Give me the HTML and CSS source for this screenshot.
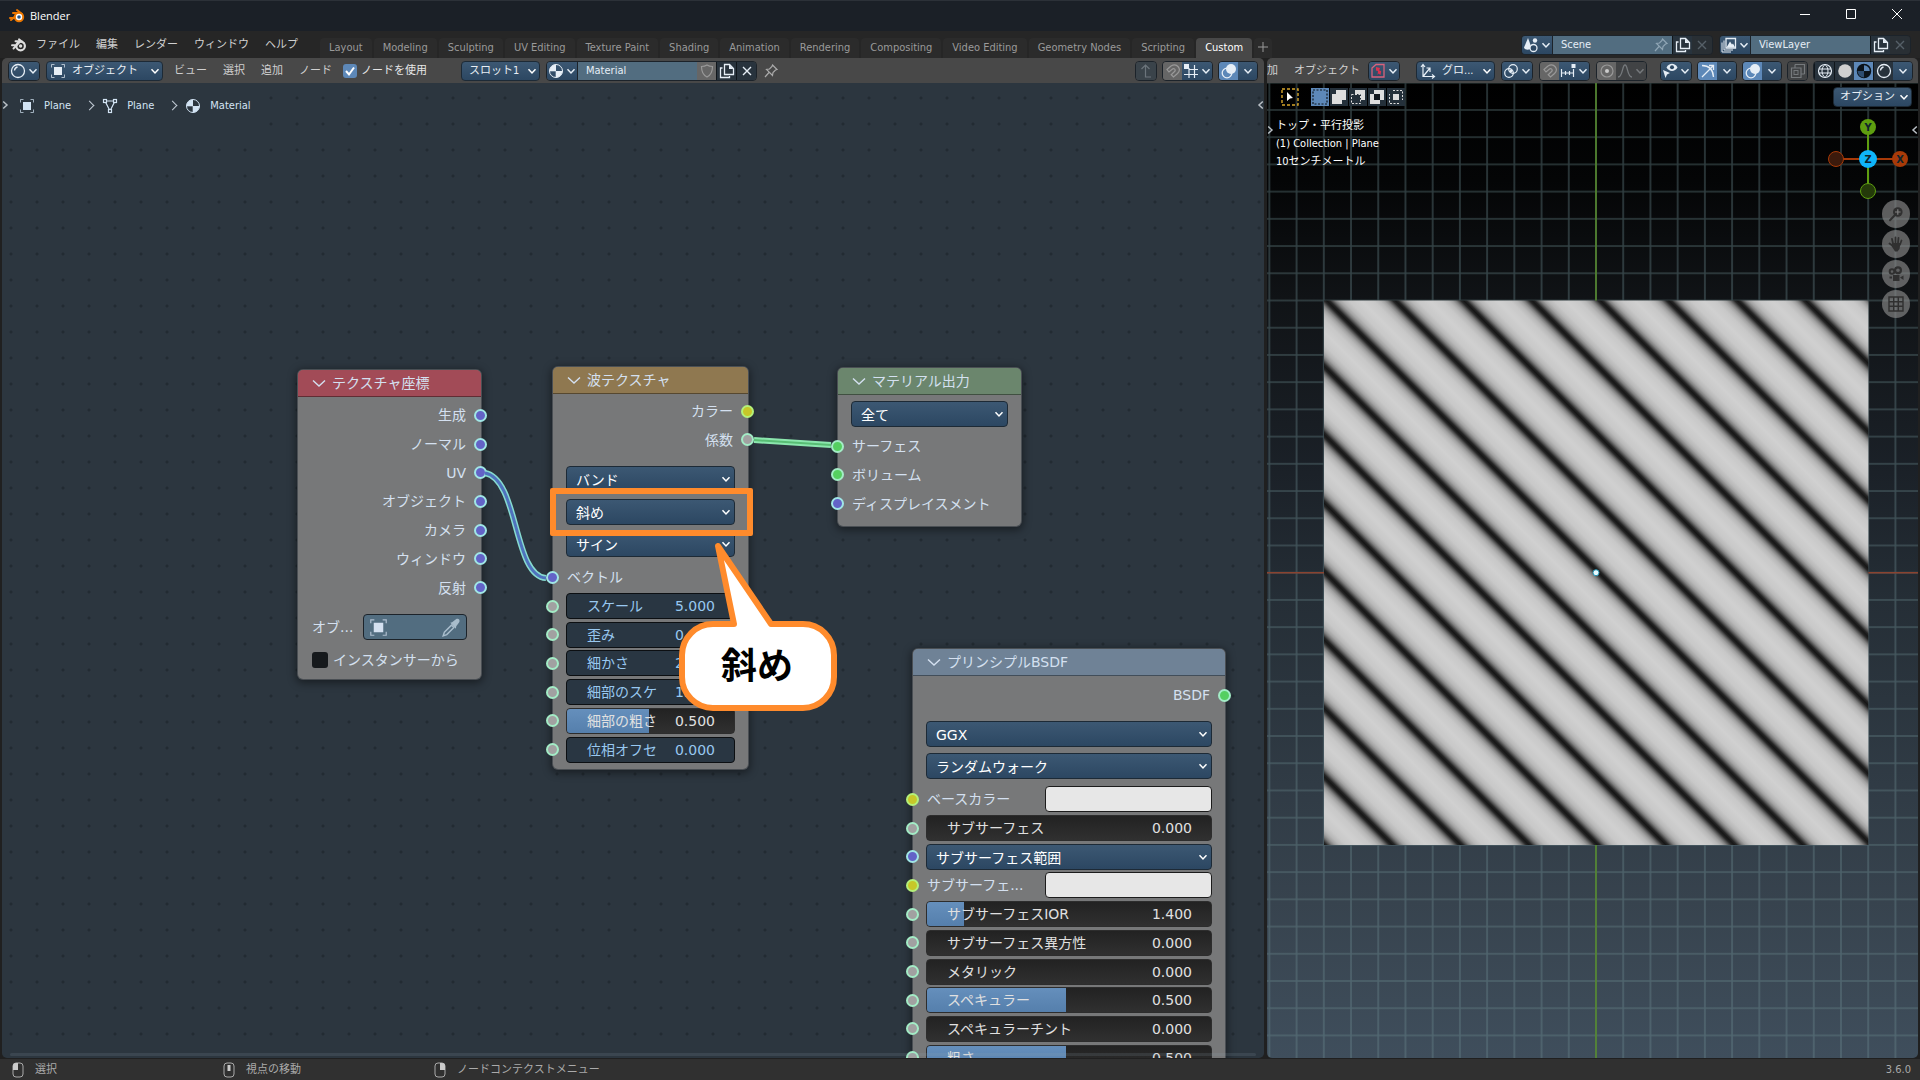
FILE: index.html
```html
<!DOCTYPE html>
<html lang="ja">
  <head>
    <meta charset="UTF-8" />
    <title>Blender</title>
    <link rel="stylesheet" href="styles.css">
  </head>
  <body>
    <!-- icon sprite -->
    <svg class="sprite" aria-hidden="true">
      <symbol id="chev" viewBox="0 0 10 10"><path d="M1.500 3.200L5 7l3.500-3.800" fill="none" stroke="currentColor" stroke-width="1.500"/></symbol>
      <symbol id="fold" viewBox="0 0 14 14"><path d="M1 4.500L7 10l6-5.500" fill="none" stroke="currentColor" stroke-width="1.400"/></symbol>
      <symbol id="logo" viewBox="0 0 16 16"><path d="M1 8.200h4.500M4.500 4.300h5L2.500 11.500M8 2.300l5 4" fill="none" stroke="currentColor" stroke-width="1.900" stroke-linecap="round"/><circle cx="9.600" cy="9" r="4.300" fill="none" stroke="currentColor" stroke-width="2.200"/><circle cx="9.600" cy="9" r="1.700" fill="currentColor"/></symbol>
      <symbol id="shader" viewBox="0 0 16 16"><circle cx="8" cy="8" r="6.500" fill="none" stroke="currentColor" stroke-width="1.300"/><path d="M4.500 7.500A4 4 0 0 1 7.500 4" fill="none" stroke="currentColor" stroke-width="1.300"/></symbol>
      <symbol id="object" viewBox="0 0 16 16"><rect x="4" y="4" width="8" height="8" fill="currentColor"/><path d="M1.500 4.500v-3h3M11.500 1.500h3v3M14.500 11.500v3h-3M4.500 14.500h-3v-3" fill="none" stroke="currentColor" stroke-opacity=".7"/></symbol>
      <symbol id="mesh" viewBox="0 0 16 16"><path d="M3 3h10L8 13z" fill="none" stroke="currentColor" stroke-width="1.200"/><g fill="#2d3740" stroke="currentColor" stroke-width="1.200"><rect x="1.500" y="1.500" width="3" height="3"/><rect x="11.500" y="1.500" width="3" height="3"/><rect x="6.500" y="11.500" width="3" height="3"/></g></symbol>
      <symbol id="material" viewBox="0 0 16 16"><circle cx="8" cy="8" r="6.500" fill="none" stroke="currentColor"/><path d="M8 1.500A6.500 6.500 0 0 0 1.500 8H8zM8 8h6.500A6.500 6.500 0 0 1 8 14.500z" fill="currentColor"/><path d="M8 14.500V8H1.500" fill="none" stroke="currentColor" stroke-width=".6"/></symbol>
      <symbol id="shield" viewBox="0 0 16 16"><path d="M8 2c2 1.300 3.500 1.500 5.500 1.500 0 5-1.500 8.500-5.500 10.500C4 12 2.500 8.500 2.500 3.500 4.500 3.500 6 3.300 8 2z" fill="none" stroke="currentColor" stroke-width="1.200"/></symbol>
      <symbol id="copy" viewBox="0 0 16 16"><path d="M5.500 1.500h5l4 4v6h-9z" fill="none" stroke="currentColor" stroke-width="1.300"/><path d="M10 1.500v4.500h4.500z" fill="currentColor"/><path d="M3.500 5h-2v9.500h9V13" fill="none" stroke="currentColor" stroke-width="1.300"/></symbol>
      <symbol id="cross" viewBox="0 0 16 16"><path d="M4 4l8 8M12 4l-8 8" stroke="currentColor" stroke-width="1.400"/></symbol>
      <symbol id="pin" viewBox="0 0 16 16"><path d="M9.500 2l4.500 4.500-1.500.5-2.500 2.500-.5 3L3.500 6.500l3-.5L9 3.500zM6 9.500l-4 4.500" fill="none" stroke="currentColor" stroke-width="1.200"/></symbol>
      <symbol id="up" viewBox="0 0 16 16"><path d="M3.500 6L7.500 2l4 4M7.500 2v12H13" fill="none" stroke="currentColor" stroke-width="1.200"/></symbol>
      <symbol id="magnet" viewBox="0 0 16 16"><path d="M2 6.500l4-3.500c6-3.500 11 3 6.500 7.500L8.500 14l-2.300-2.300 3.600-3.400C11 6.500 9 5 7.500 6L4 9z" fill="none" stroke="currentColor" stroke-width="1.200"/></symbol>
      <symbol id="snapgrid" viewBox="0 0 16 16"><path d="M6 5v10M11.500 2v13M1 11.500h14M6 6.500h9" stroke="currentColor" stroke-width="1.200"/><rect x="1" y="1" width="5" height="5" fill="currentColor"/></symbol>
      <symbol id="overlay" viewBox="0 0 16 16"><circle cx="10" cy="6" r="5" fill="currentColor"/><circle cx="6" cy="10" r="4.800" fill="none" stroke="currentColor" stroke-width="1.300"/></symbol>
      <symbol id="scene" viewBox="0 0 16 16"><path d="M5 1l3.500 9.500c-1.500 3-6.500 3-7.500 0z" fill="currentColor"/><circle cx="12" cy="3.500" r="2.200" fill="currentColor"/><circle cx="10.500" cy="11" r="3.500" fill="#2d4863" stroke="currentColor" stroke-width="1.300"/></symbol>
      <symbol id="layers" viewBox="0 0 16 16"><path d="M5 1.500h9.500V11H5z" fill="none" stroke="currentColor" stroke-width="1.300"/><path d="M5.500 10.500L9 4.500l2 3 1-1 2.200 4z" fill="currentColor"/><path d="M3 3.500V13h9M1 5.500V15h9" fill="none" stroke="currentColor"/></symbol>
      <symbol id="axes" viewBox="0 0 16 16"><path d="M3 1.500v12h11.500M3 13.500L10 5M1 4l2-2.500L5 4M12 11.500l2.500 2-2.500 2M6.500 5H10v4" fill="none" stroke="currentColor" stroke-width="1.200"/></symbol>
      <symbol id="pivot" viewBox="0 0 16 16"><circle cx="10" cy="6" r="4.300" fill="none" stroke="currentColor" stroke-width="1.200"/><circle cx="6" cy="10" r="4.300" fill="none" stroke="currentColor" stroke-width="1.200"/><circle cx="8" cy="8" r="1.500" fill="currentColor"/></symbol>
      <symbol id="increment" viewBox="0 0 16 16"><path d="M1.500 6v8M5.500 8v4M9.500 8v4M13.500 6v8M1.500 10h12" stroke="currentColor" stroke-width="1.200"/><rect x="11.500" y="1" width="4" height="4" fill="currentColor"/></symbol>
      <symbol id="prop" viewBox="0 0 16 16"><circle cx="8" cy="8" r="6" fill="none" stroke="currentColor" stroke-width="1.200"/><circle cx="8" cy="8" r="2" fill="#ccc"/></symbol>
      <symbol id="curve" viewBox="0 0 16 16"><path d="M1 14c5 0 4-12 7-12s2 12 7 12" fill="none" stroke="currentColor" stroke-width="1.300"/></symbol>
      <symbol id="redselect" viewBox="0 0 16 16"><path d="M2 14V5l4-3.500h8V14z" fill="none" stroke="#d9627c" stroke-width="1.300"/><path d="M6 4l4 1-.8 2.500 2 .5-.7 4-2-1.500-1 1.500L8 8 6 7.500z" fill="#d9324f"/></symbol>
      <symbol id="eye" viewBox="0 0 16 16"><path d="M4.500 4.500C7-.5 13-.5 15.500 4.500 13 9 7 9 4.500 4.500z" fill="currentColor"/><circle cx="10" cy="4.300" r="2" fill="#2d4863"/><path d="M1 7l7 3-3 1.500L3.500 15z" fill="currentColor"/></symbol>
      <symbol id="gizmo" viewBox="0 0 16 16"><path d="M2 2.500c7 0 11 4 11.500 11.500M2 14L13 3M9 2.500h4.500V7" fill="none" stroke="currentColor" stroke-width="1.300"/></symbol>
      <symbol id="xray" viewBox="0 0 16 16"><path d="M5 1.500h9.500V11M1.500 5H11v9.500H1.500zM5 5V1.500M11 11h3.500" fill="none" stroke="currentColor" stroke-width="1.200"/><rect x="4" y="7.500" width="4" height="4" fill="none" stroke="currentColor"/></symbol>
      <symbol id="wire" viewBox="0 0 16 16"><circle cx="8" cy="8" r="6.500" fill="none" stroke="currentColor" stroke-width="1.200"/><path d="M8 1.500c-4 3-4 10 0 13 4-3 4-10 0-13M2 6h12M2 10h12" fill="none" stroke="currentColor"/></symbol>
      <symbol id="solid" viewBox="0 0 16 16"><circle cx="8" cy="8" r="6.800" fill="#d0d0d0"/></symbol>
      <symbol id="preview" viewBox="0 0 16 16"><circle cx="8" cy="8" r="6.500" fill="#5b85b4" stroke="#0b1219" stroke-width="1.500"/><path d="M8 1.500A6.500 6.500 0 0 0 1.500 8H8zM8 8h6.500A6.500 6.500 0 0 1 8 14.500z" fill="#0b1219"/><path d="M8 8v6.500A6.500 6.500 0 0 1 1.500 8z" fill="#2e4d70"/></symbol>
      <symbol id="search" viewBox="0 0 16 16"><circle cx="9.800" cy="6" r="4.800" fill="currentColor"/><path d="M7 9l-5 5.200" stroke="currentColor" stroke-width="2" stroke-linecap="round"/><path d="M9.800 3.200v5.600M7 6h5.600" stroke="#808080" stroke-width="1.200"/></symbol>
      <symbol id="hand" viewBox="0 0 16 16"><path d="M5 7.500L4 3M7.500 7V1.500M10 7l.5-5M12 8.500l1.500-4M5 10L1.500 7.500" stroke="currentColor" stroke-width="1.800" stroke-linecap="round"/><path d="M4 7h8.500l-1 6-2 2.500H7L3.500 10z" fill="currentColor"/></symbol>
      <symbol id="camera" viewBox="0 0 16 16"><circle cx="4" cy="5.500" r="2.300" fill="none" stroke="currentColor" stroke-width="2"/><circle cx="10" cy="4.200" r="2.900" fill="none" stroke="currentColor" stroke-width="2.200"/><path d="M5 9h6.500v6H5zM12 11.500l3.500-2v4.500zM1.500 10.500h2.500v2H1.500z" fill="currentColor"/></symbol>
      <symbol id="grid" viewBox="0 0 16 16"><path d="M1 1h14v14H1zM5.700 1v14M10.300 1v14M1 5.700h14M1 10.300h14" fill="none" stroke="currentColor" stroke-width="1.400"/></symbol>
      <symbol id="dropper" viewBox="0 0 16 16"><path d="M1 15l1-3 6-6 2 2-6 6z" fill="none" stroke="currentColor" stroke-width="1.200"/><path d="M7 4l1.500-.5L12 .8c2-.8 3.500 1 2.500 2.800L12 7l-.3 2z" fill="currentColor"/></symbol>
    </svg>

    <header class="titlebar">
      <svg class="app-icon" viewBox="0 0 16 16"><path d="M1 10h4M4 5h6L2 12M8 2l5 4" fill="none" stroke="#ea7600" stroke-width="2" stroke-linecap="round"/><circle cx="10" cy="9" r="5.200" fill="#ea7600"/><circle cx="10" cy="9" r="3.200" fill="#fff"/><circle cx="10" cy="9" r="1.800" fill="#265787"/></svg>
      <h1>Blender</h1>
      <div class="window-buttons">
        <button aria-label="Minimize"><svg viewBox="0 0 10 10"><path d="M0 5.500h10" stroke="#fff"/></svg></button>
        <button aria-label="Maximize"><svg viewBox="0 0 10 10"><path d="M.5.500h9v9h-9z" fill="none" stroke="#fff"/></svg></button>
        <button aria-label="Close"><svg viewBox="0 0 10 10"><path d="M0 0l10 10M10 0L0 10" stroke="#fff"/></svg></button>
      </div>
    </header>

    <div class="topbar">
      <svg class="icon logo"><use href="#logo"/></svg>
      <nav class="menu">
        <a href="#">ファイル</a><a href="#">編集</a><a href="#">レンダー</a><a href="#">ウィンドウ</a><a href="#">ヘルプ</a>
      </nav>
      <nav class="tabs">
        <a href="#">Layout</a>
        <a href="#">Modeling</a>
        <a href="#">Sculpting</a>
        <a href="#">UV Editing</a>
        <a href="#">Texture Paint</a>
        <a href="#">Shading</a>
        <a href="#">Animation</a>
        <a href="#">Rendering</a>
        <a href="#">Compositing</a>
        <a href="#">Video Editing</a>
        <a href="#">Geometry Nodes</a>
        <a href="#">Scripting</a>
        <a href="#" class="active">Custom</a>
        <a href="#" class="plus" aria-label="Add workspace"><svg viewBox="0 0 10 10"><path d="M5 0v10M0 5h10" stroke="#9a9a9a"/></svg></a>
      </nav>
      <div class="group scene">
        <button class="dd"><svg class="icon"><use href="#scene"/></svg><svg class="chev"><use href="#chev"/></svg></button>
        <span class="name-box"><input aria-label="Scene" value="Scene"><svg class="icon faint"><use href="#pin"/></svg></span>
        <button class="dark"><svg class="icon"><use href="#copy"/></svg></button>
        <button class="off"><svg class="icon"><use href="#cross"/></svg></button>
      </div>
      <div class="group">
        <button class="dd"><svg class="icon"><use href="#layers"/></svg><svg class="chev"><use href="#chev"/></svg></button>
        <span class="name-box"><input aria-label="View layer" value="ViewLayer"></span>
        <button class="dark"><svg class="icon"><use href="#copy"/></svg></button>
        <button class="off"><svg class="icon"><use href="#cross"/></svg></button>
      </div>
    </div>

    <main class="workspace">
      <section class="area node-area">
        <div class="area-header">
          <div class="group"><button class="dd"><svg class="icon"><use href="#shader"/></svg><svg class="chev"><use href="#chev"/></svg></button></div>
          <div class="mode">
            <svg class="icon"><use href="#object"/></svg>
            <select aria-label="Shader type"><option>オブジェクト</option></select>
          </div>
          <nav class="menu">
            <a href="#">ビュー</a><a href="#">選択</a><a href="#">追加</a><a href="#">ノード</a>
          </nav>
          <label class="use-nodes"><input type="checkbox" checked>ノードを使用</label>
          <select class="slot" aria-label="Slot"><option>スロット1</option></select>
          <div class="group">
            <button class="dd"><svg class="icon"><use href="#material"/></svg><svg class="chev"><use href="#chev"/></svg></button>
            <span class="name-box"><input aria-label="Material" value="Material"></span>
            <button class="gray"><svg class="icon"><use href="#shield"/></svg></button>
            <button class="dark"><svg class="icon"><use href="#copy"/></svg></button>
            <button class="dark"><svg class="icon"><use href="#cross"/></svg></button>
          </div>
          <svg class="icon header-pin"><use href="#pin"/></svg>
          <div class="header-right">
            <div class="group"><button class="off up"><svg class="icon"><use href="#up"/></svg></button></div>
            <div class="group">
              <button class="gray"><svg class="icon"><use href="#magnet"/></svg></button>
              <button class="dd"><svg class="icon"><use href="#snapgrid"/></svg><svg class="chev"><use href="#chev"/></svg></button>
            </div>
            <div class="group">
              <button class="on"><svg class="icon"><use href="#overlay"/></svg></button>
              <button><svg class="chev"><use href="#chev"/></svg></button>
            </div>
          </div>
        </div>

        <div class="node-canvas">
          <ol class="breadcrumb">
            <li><svg class="icon"><use href="#object"/></svg>Plane</li>
            <li><svg class="icon"><use href="#mesh"/></svg>Plane</li>
            <li><svg class="icon"><use href="#material"/></svg>Material</li>
          </ol>
          <svg class="edge edge-left"><use href="#chev"/></svg>
          <svg class="edge edge-right"><use href="#chev"/></svg>

          <article class="node coord">
            <h2><svg class="fold"><use href="#fold"/></svg>テクスチャ座標</h2>
            <ul class="rows">
              <li class="out">生成<i class="socket vector"></i></li>
              <li class="out">ノーマル<i class="socket vector"></i></li>
              <li class="out">UV<i class="socket vector"></i></li>
              <li class="out">オブジェクト<i class="socket vector"></i></li>
              <li class="out">カメラ<i class="socket vector"></i></li>
              <li class="out">ウィンドウ<i class="socket vector"></i></li>
              <li class="out">反射<i class="socket vector"></i></li>
            </ul>
            <div class="object-row">
              <span>オブ...</span>
              <button class="object-pick" aria-label="オブジェクト"><svg class="icon"><use href="#object"/></svg><svg class="icon dropper"><use href="#dropper"/></svg></button>
            </div>
            <label class="instancer"><input type="checkbox">インスタンサーから</label>
          </article>

          <article class="node wave">
            <h2><svg class="fold"><use href="#fold"/></svg>波テクスチャ</h2>
            <ul class="rows">
              <li class="out">カラー<i class="socket color"></i></li>
              <li class="out">係数<i class="socket value"></i></li>
            </ul>
            <div class="selects">
              <select aria-label="Wave type"><option>バンド</option></select>
              <select aria-label="Bands direction"><option>斜め</option></select>
              <select aria-label="Wave profile"><option>サイン</option></select>
            </div>
            <ul class="rows">
              <li class="in">ベクトル<i class="socket vector"></i></li>
              <li><label class="field keyed"><span>スケール</span><input value="5.000"></label><i class="socket value"></i></li>
              <li><label class="field keyed"><span>歪み</span><input value="0.000"></label><i class="socket value"></i></li>
              <li><label class="field keyed"><span>細かさ</span><input value="2.000"></label><i class="socket value"></i></li>
              <li><label class="field keyed"><span>細部のスケ</span><input value="1.000"></label><i class="socket value"></i></li>
              <li><label class="field"><b class="fill" style="width: 49%"></b><span>細部の粗さ</span><input value="0.500"></label><i class="socket value"></i></li>
              <li><label class="field keyed"><span>位相オフセ</span><input value="0.000"></label><i class="socket value"></i></li>
            </ul>
          </article>

          <article class="node output">
            <h2><svg class="fold"><use href="#fold"/></svg>マテリアル出力</h2>
            <div class="selects">
              <select aria-label="Target"><option>全て</option></select>
            </div>
            <ul class="rows">
              <li class="in">サーフェス<i class="socket shader"></i></li>
              <li class="in">ボリューム<i class="socket shader"></i></li>
              <li class="in">ディスプレイスメント<i class="socket vector"></i></li>
            </ul>
          </article>

          <article class="node bsdf">
            <h2><svg class="fold"><use href="#fold"/></svg>プリンシプルBSDF</h2>
            <ul class="rows">
              <li class="out">BSDF<i class="socket shader"></i></li>
            </ul>
            <div class="selects">
              <select aria-label="Distribution"><option>GGX</option></select>
              <select aria-label="Subsurface method"><option>ランダムウォーク</option></select>
            </div>
            <ul class="rows">
              <li class="in swatch-row">ベースカラー<button class="swatch" aria-label="ベースカラー"></button><i class="socket color"></i></li>
              <li><label class="field"><span>サブサーフェス</span><input value="0.000"></label><i class="socket value"></i></li>
              <li><select aria-label="Subsurface radius"><option>サブサーフェス範囲</option></select><i class="socket vector"></i></li>
              <li class="in swatch-row">サブサーフェ...<button class="swatch" aria-label="サブサーフェスカラー"></button><i class="socket color"></i></li>
              <li><label class="field"><b class="fill" style="width: 13%"></b><span>サブサーフェスIOR</span><input value="1.400"></label><i class="socket value"></i></li>
              <li><label class="field"><span>サブサーフェス異方性</span><input value="0.000"></label><i class="socket value"></i></li>
              <li><label class="field"><span>メタリック</span><input value="0.000"></label><i class="socket value"></i></li>
              <li><label class="field"><b class="fill" style="width: 49%"></b><span>スペキュラー</span><input value="0.500"></label><i class="socket value"></i></li>
              <li><label class="field"><span>スペキュラーチント</span><input value="0.000"></label><i class="socket value"></i></li>
              <li><label class="field"><b class="fill" style="width: 49%"></b><span>粗さ</span><input value="0.500"></label><i class="socket value"></i></li>
            </ul>
          </article>

          <!-- node links -->
          <svg class="links">
            <g fill="none">
              <path d="M485 391C519 397 513 494 546 496" stroke="#86dbd0" stroke-width="6"/>
              <path d="M485 391C519 397 513 494 546 496" stroke="#4f72bd" stroke-width="3"/>
              <path d="M754 358L831 363" stroke="#8be6ad" stroke-width="6"/>
              <path d="M754 358L831 363" stroke="#58bd74" stroke-width="2"/>
            </g>
          </svg>

          <div class="highlight"></div>
          <div class="callout">
            <svg viewBox="0 0 162 174"><path d="M55 84L39 6L92 84H124A31 31 0 0 1 155 115V137A31 31 0 0 1 124 168H34A31 31 0 0 1 3 137V115A31 31 0 0 1 34 84Z" fill="#fff" stroke="#ff8b2c" stroke-width="6" stroke-linejoin="round"/></svg>
            <p>斜め</p>
          </div>
          <div class="scrollbar"></div>
        </div>
      </section>

      <section class="area view-area">
        <div class="area-header">
          <nav class="menu">
            <a href="#" class="cut">加</a><a href="#">オブジェクト</a>
          </nav>
          <div class="group red"><button class="dd"><svg class="icon"><use href="#redselect"/></svg><svg class="chev"><use href="#chev"/></svg></button></div>
          <div class="mode orient">
            <svg class="icon"><use href="#axes"/></svg>
            <select aria-label="Orientation"><option>グロ...</option></select>
          </div>
          <div class="group"><button class="dd"><svg class="icon"><use href="#pivot"/></svg><svg class="chev"><use href="#chev"/></svg></button></div>
          <div class="group">
            <button class="gray"><svg class="icon"><use href="#magnet"/></svg></button>
            <button class="dd"><svg class="icon"><use href="#increment"/></svg><svg class="chev"><use href="#chev"/></svg></button>
          </div>
          <div class="group">
            <button class="gray"><svg class="icon"><use href="#prop"/></svg></button>
            <button class="dd muted"><svg class="icon"><use href="#curve"/></svg><svg class="chev"><use href="#chev"/></svg></button>
          </div>
          <div class="header-right">
            <div class="group"><button class="dd"><svg class="icon"><use href="#eye"/></svg><svg class="chev"><use href="#chev"/></svg></button></div>
            <div class="group"><button class="on"><svg class="icon"><use href="#gizmo"/></svg></button><button><svg class="chev"><use href="#chev"/></svg></button></div>
            <div class="group"><button class="on"><svg class="icon"><use href="#overlay"/></svg></button><button><svg class="chev"><use href="#chev"/></svg></button></div>
            <div class="group"><button class="muted"><svg class="icon"><use href="#xray"/></svg></button></div>
            <div class="group shading">
              <button class="dark"><svg class="icon"><use href="#wire"/></svg></button>
              <button class="dark"><svg class="icon"><use href="#solid"/></svg></button>
              <button class="on"><svg class="icon"><use href="#preview"/></svg></button>
              <button class="dark"><svg class="icon"><use href="#shader"/></svg></button>
              <button><svg class="chev"><use href="#chev"/></svg></button>
            </div>
          </div>
        </div>

        <div class="view-canvas">
          <svg class="scene-view">
            <defs>
              <pattern id="floor" x="329" y="489.700" width="27.220" height="27.220" patternUnits="userSpaceOnUse">
                <path d="M0 0H27.220M0 0V27.220M27.220 0V27.220M0 27.220H27.220" stroke="#6b8b8f" stroke-opacity=".42" stroke-width="1.600"/>
              </pattern>
              <linearGradient id="wave" gradientUnits="userSpaceOnUse" x1="57" y1="762" x2="91.200" y2="727.800" spreadMethod="repeat">
                <stop offset="0" stop-color="#161616"/>
                <stop offset=".04" stop-color="#262626"/>
                <stop offset=".08" stop-color="#555"/>
                <stop offset=".12" stop-color="#808080"/>
                <stop offset=".17" stop-color="#a2a2a2"/>
                <stop offset=".23" stop-color="#b8b8b8"/>
                <stop offset=".32" stop-color="#c8c8c8"/>
                <stop offset=".5" stop-color="#d0d0d0"/>
                <stop offset=".68" stop-color="#c8c8c8"/>
                <stop offset=".77" stop-color="#b8b8b8"/>
                <stop offset=".83" stop-color="#a2a2a2"/>
                <stop offset=".88" stop-color="#808080"/>
                <stop offset=".92" stop-color="#555"/>
                <stop offset=".96" stop-color="#262626"/>
                <stop offset="1" stop-color="#161616"/>
              </linearGradient>
            </defs>
            <rect width="100%" height="100%" fill="url(#floor)"/>
            <path d="M0 489.700H652" stroke="#8a4330" stroke-width="1.600"/>
            <path d="M329 0V975" stroke="#558a2c" stroke-width="1.600"/>
            <rect x="57" y="217.500" width="544.400" height="544.500" fill="url(#wave)"/>
            <circle cx="329" cy="489.700" r="3" fill="#e8fbff" stroke="#2596b5"/>
          </svg>

          <div class="tool-row">
            <button class="cursor-tool" aria-label="Select box"><svg viewBox="0 0 18 18"><rect x="1" y="1" width="16" height="16" fill="none" stroke="#d8a62c" stroke-width="1.400" stroke-dasharray="3 2"/><path d="M6 4l6 6-3 .5L6 13z" fill="#fff"/></svg></button>
            <div class="select-modes">
              <button class="on" aria-label="Set"><svg viewBox="0 0 16 16"><rect x="1" y="1" width="14" height="14" fill="none" stroke="#101820" stroke-width="1.200" stroke-dasharray="2 1.500"/></svg></button>
              <button aria-label="Extend"><svg viewBox="0 0 16 16"><path d="M5 1h10v10h-4v4H1V5h4z" fill="#ddd"/></svg></button>
              <button aria-label="Subtract"><svg viewBox="0 0 16 16"><path d="M5 1h10v10h-4V5H5z" fill="#ddd"/><rect x="1.500" y="5.500" width="9" height="9" fill="none" stroke="#ddd" stroke-dasharray="2 1.500"/></svg></button>
              <button aria-label="Difference"><svg viewBox="0 0 16 16"><path d="M5 1h10v10h-4v4H1V5h4z" fill="#ddd"/><path d="M5 5h6v6H5z" fill="#10161c"/></svg></button>
              <button aria-label="Intersect"><svg viewBox="0 0 16 16"><path d="M5 5h6v6H5z" fill="#ddd"/><path d="M5 1.500h9.500V11M11 14.500H1.500V5" fill="none" stroke="#ddd" stroke-dasharray="2 1.500"/></svg></button>
            </div>
            <select class="options" aria-label="Options"><option>オプション</option></select>
          </div>
          <div class="view-text">
            <p>トップ・平行投影</p>
            <p>(1) Collection | Plane</p>
            <p>10センチメートル</p>
          </div>

          <svg class="axis-gizmo" viewBox="0 0 82 82">
            <path d="M41 9v64" stroke="#5e9e10" stroke-width="2"/>
            <path d="M9 41h64" stroke="#a83a08" stroke-width="2"/>
            <circle cx="9" cy="41" r="7.500" fill="#3c1a0c" stroke="#a83a08"/>
            <circle cx="41" cy="73" r="7.500" fill="#243a0a" stroke="#5e9e10"/>
            <circle cx="73" cy="41" r="8" fill="#a83a08"/>
            <circle cx="41" cy="9" r="8" fill="#5e9e10"/>
            <circle cx="41" cy="41" r="9" fill="#0fb5fa"/>
            <text x="41" y="13">Y</text><text x="41" y="45">Z</text><text x="73" y="45">X</text>
          </svg>
          <div class="nav-buttons">
            <button aria-label="Zoom"><svg class="icon"><use href="#search"/></svg></button>
            <button aria-label="Pan"><svg class="icon"><use href="#hand"/></svg></button>
            <button aria-label="Camera"><svg class="icon"><use href="#camera"/></svg></button>
            <button aria-label="Orthographic"><svg class="icon"><use href="#grid"/></svg></button>
          </div>
          <svg class="edge edge-left"><use href="#chev"/></svg>
          <svg class="edge edge-right"><use href="#chev"/></svg>
        </div>
      </section>
    </main>

    <footer class="statusbar">
      <span><svg viewBox="0 0 12 16"><rect x="1" y="1" width="10" height="14" rx="3" fill="none" stroke="#aaa"/><path d="M1 8V4a3 3 0 0 1 3-3h2v7z" fill="#ccc"/></svg>選択</span>
      <span><svg viewBox="0 0 12 16"><rect x="1" y="1" width="10" height="14" rx="3" fill="none" stroke="#aaa"/><path d="M4.500 3h3v6h-3z" fill="#ccc"/></svg>視点の移動</span>
      <span><svg viewBox="0 0 12 16"><rect x="1" y="1" width="10" height="14" rx="3" fill="none" stroke="#aaa"/><path d="M11 8V4a3 3 0 0 0-3-3H6v7z" fill="#ccc"/></svg>ノードコンテクストメニュー</span>
      <span class="version">3.6.0</span>
    </footer>
  </body>
</html>
```
FILE: styles.css
```css
* {
  box-sizing: border-box;
}
body {
  margin: 0;
  height: 100vh;
  display: flex;
  flex-direction: column;
  overflow: hidden;
  background: #202020;
  color: #d0d0d0;
  font-family: "DejaVu Sans Condensed", "DejaVu Sans", "Noto Sans CJK JP", sans-serif;
  font-size: 11px;
  line-height: 18px;
}
h1,
h2,
p,
ul,
ol {
  margin: 0;
  padding: 0;
  list-style: none;
  font-weight: normal;
}
a {
  color: inherit;
  text-decoration: none;
}
button,
input,
select {
  font: inherit;
  color: inherit;
  margin: 0;
  padding: 0;
  border: 0;
  background: none;
}
select {
  appearance: none;
  height: 20px;
  padding: 0 14px 0 10px;
  border: 1px solid #1d2a36;
  border-radius: 4px;
  color: #e8eef4;
  background:
    url("data:image/svg+xml,%3Csvg xmlns='http://www.w3.org/2000/svg' viewBox='0 0 10 10'%3E%3Cpath d='M1.500 3.200L5 7l3.500-3.800' fill='none' stroke='white' stroke-width='1.500'/%3E%3C/svg%3E") right 2px center / 10px 10px no-repeat,
    linear-gradient(#3c5873, #2c4762);
}
.sprite {
  position: absolute;
  width: 0;
  height: 0;
}
.icon {
  width: 16px;
  height: 16px;
  flex: none;
}
.chev {
  width: 10px;
  height: 10px;
  flex: none;
}

/* title bar */
.titlebar {
  height: 31px;
  flex: none;
  display: flex;
  align-items: center;
  gap: 5px;
  padding-left: 9px;
  background: #1b2027;
  border-top: 1px solid #2c3138;
}
.app-icon {
  width: 16px;
  height: 16px;
}
.titlebar h1 {
  font-family: "Open Sans", sans-serif;
  font-size: 11px;
  color: #fff;
}
.window-buttons {
  margin-left: auto;
  display: flex;
}
.window-buttons button {
  width: 46px;
  height: 30px;
}
.window-buttons svg {
  width: 10px;
  height: 10px;
}

/* top bar */
.topbar {
  height: 27px;
  flex: none;
  display: flex;
  align-items: center;
  padding: 0 9px 0 11px;
  gap: 6px;
  background: #262626;
}
.logo {
  color: #ddd;
}
.menu {
  display: flex;
}
.topbar .menu {
  margin-left: -5px;
}
.menu a {
  padding: 0 8px;
  white-space: nowrap;
}
.tabs {
  display: flex;
  gap: 2px;
  margin-left: 8px;
  align-self: flex-end;
  color: #9a9a9a;
}
.tabs a {
  height: 20px;
  padding: 1px 9px;
  border-radius: 4px 4px 0 0;
  background: #2b2b2b;
  white-space: nowrap;
}
.tabs .active {
  background: #484848;
  color: #fff;
}
.tabs .plus {
  padding: 4px 4px;
}
.plus svg {
  display: block;
  width: 10px;
  height: 10px;
}
.scene {
  margin-left: auto;
}

/* joined buttons */
.group {
  height: 20px;
  flex: none;
  display: flex;
  border: 1px solid #1c232a;
  border-radius: 4px;
  overflow: hidden;
  color: #e6eef6;
}
.group button {
  width: 19px;
  display: flex;
  align-items: center;
  justify-content: center;
  background: linear-gradient(#3c5873, #2c4762);
}
.group .dd {
  width: 30px;
  gap: 2px;
}
.group .gray {
  background: #666;
  color: #999;
}
.group .dark {
  width: 20px;
  background: #28333d;
  border-left: 1px solid #10161b;
}
.group .off {
  width: 20px;
  background: #292f34;
  color: #566068;
}
.group .up {
  background: #3a434a;
  color: #6c757c;
}
.group .on {
  background: #5d88b8;
}
.group .muted {
  background: #414345;
  color: #75797c;
}
.name-box {
  width: 120px;
  display: flex;
  align-items: center;
  padding: 0 3px 0 8px;
  border-left: 1px solid #1c232a;
  background: #526d80;
}
.name-box input {
  width: 100%;
  min-width: 0;
}
.faint {
  color: #8fa5b4;
}

/* editors */
.workspace {
  flex: 1;
  min-height: 0;
  display: grid;
  grid-template-columns: 1262fr 651fr;
  gap: 3px;
  padding: 0 2px 1px;
}
.area {
  min-width: 0;
  display: flex;
  flex-direction: column;
  border-radius: 5px;
  overflow: hidden;
}
.area-header {
  height: 25px;
  flex: none;
  display: flex;
  align-items: center;
  gap: 6px;
  padding: 0 6px;
  background: #484848;
}
.mode {
  position: relative;
}
.mode .icon {
  position: absolute;
  left: 4px;
  top: 2px;
  color: #e6eef6;
}
.mode select {
  width: 117px;
  padding-left: 25px;
}
.node-area .menu {
  margin-left: -3px;
}
.use-nodes {
  display: flex;
  align-items: center;
  gap: 4px;
  margin-left: -3px;
  color: #e6e6e6;
}
input[type="checkbox"] {
  appearance: none;
  width: 14px;
  height: 14px;
  border-radius: 3px;
  background: #16191c;
}
.use-nodes input[type="checkbox"]:checked {
  background: #5d88b8 url("data:image/svg+xml,%3Csvg xmlns='http://www.w3.org/2000/svg' viewBox='0 0 14 14'%3E%3Cpath d='M3 7l3 3.500L11 3.500' fill='none' stroke='white' stroke-width='2'/%3E%3C/svg%3E");
}
.slot {
  width: 79px;
  margin-left: 28px;
  padding-left: 7px;
}
.header-pin {
  color: #aaa;
}
.header-right {
  margin-left: auto;
  display: flex;
  gap: 5px;
}

/* node editor */
.node-canvas {
  flex: 1;
  min-height: 0;
  position: relative;
  overflow: hidden;
  background: radial-gradient(circle at 13px 13px, #222b32 1px, transparent 2px) 22px 2px / 26px 26px #2c363f;
}
.breadcrumb {
  display: flex;
  align-items: center;
  width: 262px;
  height: 45px;
  padding-left: 17px;
  color: #d3e4f4;
  background: #2c363f;
}
.breadcrumb li {
  display: flex;
  align-items: center;
  gap: 9px;
}
.breadcrumb li + li::before {
  content: "";
  width: 6px;
  height: 6px;
  margin-left: 15px;
  border: solid #c3cdd6;
  border-width: 1px 1px 0 0;
  transform: rotate(45deg);
}
.edge {
  position: absolute;
  top: 17px;
  width: 10px;
  height: 10px;
  color: #b8bfc5;
}
.edge-left {
  left: -2px;
  transform: rotate(-90deg);
}
.edge-right {
  right: -2px;
  transform: rotate(90deg);
}
.links {
  position: absolute;
  left: -2px;
  top: -1px;
  width: 100%;
  height: 100%;
  pointer-events: none;
}
.node {
  position: absolute;
  font-family: "DejaVu Sans", "Noto Sans CJK JP", sans-serif;
  font-size: 14px;
  line-height: 26px;
  color: #d4e0f0;
  background: #777879;
  border-radius: 5px;
  box-shadow: 0 0 0 1px #4a4f54, 0 2px 8px 2px rgba(0, 0, 0, 0.45);
}
.node h2 {
  height: 27px;
  display: flex;
  align-items: center;
  gap: 6px;
  padding-left: 14px;
  font-size: 14px;
  border-bottom: 1px solid rgba(0, 0, 0, 0.4);
  border-radius: 5px 5px 0 0;
}
.fold {
  width: 14px;
  height: 14px;
}
.node .rows {
  display: grid;
  grid-auto-rows: 1fr;
}
.node li {
  position: relative;
  display: flex;
  align-items: center;
  padding: 0 13px;
}
.node .out {
  justify-content: flex-end;
  padding-right: 15px;
}
.node .in {
  padding-left: 14px;
}
.socket {
  position: absolute;
  left: -7px;
  width: 13px;
  height: 13px;
  border: 2px solid #a3ecc6;
  border-radius: 50%;
}
.out .socket {
  left: auto;
  right: -6px;
}
.vector {
  background: #6363c7;
  border-color: #a0e6e6;
}
.color {
  background: #c7c729;
  border-color: #b4f07a;
}
.value {
  background: #a1a1a1;
}
.shader {
  background: #55cf60;
}
.node select {
  width: 100%;
  height: 26px;
  padding-left: 9px;
  color: #fff;
  background-position: right 3px center, 0 0;
}
.selects {
  display: flex;
  flex-direction: column;
  justify-content: space-between;
  padding: 0 13px;
}
.field {
  position: relative;
  width: 100%;
  height: 26px;
  display: flex;
  align-items: center;
  justify-content: space-between;
  padding: 0 19px 0 20px;
  border: 1px solid #2d2d2d;
  border-radius: 4px;
  background: linear-gradient(#222, #303030);
  color: #e0e0e0;
  overflow: hidden;
}
.field span,
.field input {
  position: relative;
  white-space: nowrap;
}
.field input {
  width: 50px;
  text-align: right;
}
.fill {
  position: absolute;
  left: 0;
  top: 0;
  bottom: 0;
  background: linear-gradient(#658fbc, #557fac);
}
.keyed {
  border-color: #0c0f12;
  background: #293642;
  color: #98c8f0;
}
.swatch-row {
  justify-content: space-between;
}
.swatch {
  width: 167px;
  height: 26px;
  border: 1px solid #1c1c1c;
  border-radius: 4px;
  background: #e7e7e7;
}

.coord {
  left: 296px;
  top: 287px;
  width: 183px;
  height: 309px;
}
.coord h2 {
  background: #a24b57;
}
.coord .rows {
  margin-top: 4px;
  height: 201px;
}
.object-row {
  display: flex;
  justify-content: space-between;
  margin-top: 12px;
  padding: 0 14px;
}
.object-pick {
  width: 104px;
  height: 26px;
  display: flex;
  align-items: center;
  justify-content: space-between;
  padding: 0 5px;
  border: 1px solid #1c232a;
  border-radius: 4px;
  background: #526d80;
}
.object-pick .icon {
  width: 19px;
  height: 19px;
}
.object-pick .dropper {
  color: #a9bdcc;
}
.instancer {
  display: flex;
  align-items: center;
  gap: 5px;
  margin: 7px 14px;
}
.instancer input[type="checkbox"] {
  width: 16px;
  height: 16px;
}
.wave {
  left: 551px;
  top: 284px;
  width: 195px;
  height: 402px;
}
.wave h2 {
  background: #8f7850;
}
.wave .rows {
  margin-top: 3px;
  height: 57px;
}
.wave .selects {
  margin-top: 12px;
  height: 91px;
}
.wave .selects + .rows {
  margin-top: 6px;
  height: 201px;
}
.output {
  left: 836px;
  top: 285px;
  width: 183px;
  height: 158px;
}
.output h2 {
  background: #6b866d;
}
.output .selects {
  margin-top: 6px;
}
.output .rows {
  margin-top: 5px;
  height: 86px;
}
.bsdf {
  left: 911px;
  top: 566px;
  width: 312px;
}
.bsdf h2 {
  background: #6f8296;
}
.bsdf .rows {
  margin-top: 5px;
  height: 28px;
}
.bsdf .selects {
  margin-top: 12px;
  height: 58px;
}
.bsdf .selects + .rows {
  margin-top: 6px;
  height: 287px;
}

.highlight {
  position: absolute;
  left: 548px;
  top: 405px;
  width: 203px;
  height: 48px;
  border: 6px solid #ff8b2c;
  border-radius: 2px;
}
.callout {
  position: absolute;
  left: 677px;
  top: 457px;
  width: 162px;
  height: 174px;
}
.callout p {
  position: absolute;
  left: 0;
  right: 6px;
  top: 97px;
  text-align: center;
  font: bold 36px/52px "Noto Sans CJK JP", sans-serif;
  color: #000;
}
.scrollbar {
  position: absolute;
  left: 8px;
  right: 8px;
  bottom: 2px;
  height: 3px;
  border-radius: 2px;
  background: rgba(150, 165, 180, 0.15);
}

/* 3D viewport */
.view-area .area-header {
  padding: 0 5px 0 0;
}
.view-area .menu .cut {
  padding-left: 0;
}
.view-area .menu {
  margin-right: -6px;
}
.orient {
  margin-left: 10px;
}
.orient select {
  width: 79px;
}
.shading button {
  width: 19px;
}
.view-canvas {
  flex: 1;
  min-height: 0;
  position: relative;
  overflow: hidden;
  background: linear-gradient(#000 0%, #040506 10%, #101316 22%, #1b2128 40%, #252e36 53%, #303b45 72%, #37434e 84%, #3f4e5c 100%);
}
.scene-view {
  position: absolute;
  inset: 0;
  width: 100%;
  height: 100%;
}
.tool-row {
  position: relative;
  display: flex;
  align-items: center;
  gap: 12px;
  padding: 4px 6px 0 14px;
}
.cursor-tool svg {
  display: block;
  width: 18px;
  height: 18px;
}
.select-modes {
  display: flex;
  gap: 1px;
}
.select-modes button {
  width: 18px;
  height: 18px;
  padding: 1px;
  background: #24303a;
}
.select-modes .on {
  background: #5d88b8;
}
.select-modes svg {
  display: block;
}
.options {
  width: 79px;
  margin-left: auto;
  padding-left: 6px;
}
.view-text {
  position: relative;
  padding: 10px 9px;
  color: #fff;
}
.axis-gizmo {
  position: absolute;
  top: 35px;
  right: 9px;
  width: 82px;
  height: 82px;
}
.axis-gizmo text {
  font-size: 11px;
  font-weight: bold;
  text-anchor: middle;
  fill: #10242c;
}
.nav-buttons {
  position: absolute;
  top: 117px;
  right: 8px;
  display: flex;
  flex-direction: column;
  gap: 2px;
}
.nav-buttons button {
  width: 28px;
  height: 28px;
  display: flex;
  align-items: center;
  justify-content: center;
  border-radius: 50%;
  background: rgba(140, 140, 140, 0.65);
  color: #303030;
}
.view-canvas .edge {
  top: 42px;
}

/* status bar */
.statusbar {
  height: 21px;
  flex: none;
  display: flex;
  align-items: center;
  padding: 0 9px 0 12px;
  background: #303030;
  color: #aaa;
}
.statusbar span {
  width: 211px;
  display: flex;
  align-items: center;
  gap: 11px;
  white-space: nowrap;
}
.statusbar svg {
  width: 12px;
  height: 16px;
}
.statusbar .version {
  width: auto;
  margin-left: auto;
}
```
